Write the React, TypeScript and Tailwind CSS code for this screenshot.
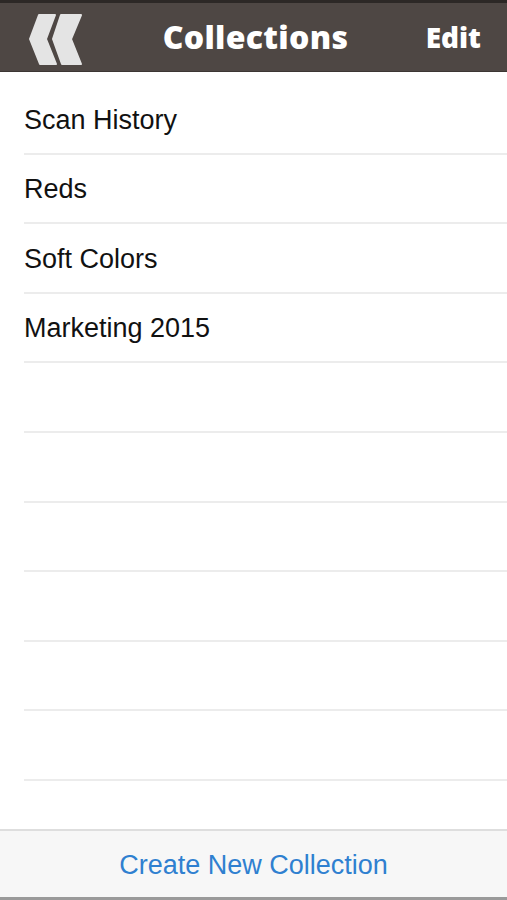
import React from "react";

const items = ["Scan History", "Reds", "Soft Colors", "Marketing 2015", "", "", "", "", "", ""];

export default function App() {
  return (
    <div className="w-[507px] h-[900px] flex flex-col bg-white overflow-hidden" style={{ fontFamily: '"Liberation Sans", Arial, sans-serif' }}>
      <header className="h-[72px] shrink-0 bg-[#4e4744] border-t-[3px] border-[#2c2826] border-b border-b-[#3c3633] flex items-center relative">
        <svg className="absolute left-[26px] top-[9px]" width="60" height="56" viewBox="0 0 60 56">
          <g fill="#e4e4e4" stroke="#e4e4e4" strokeWidth="2" strokeLinejoin="round">
            <polygon points="13,3 29,3 20,27 30,52 14,52 4,27" />
            <polygon points="35,3 55,3 45,27 55,52 36,52 27,27" />
          </g>
        </svg>
        <div className="flex-1 text-center text-white text-[32px] font-extrabold tracking-[0.3px] pl-[4px] leading-none" style={{ fontFamily: '"Open Sans", sans-serif' }}>
          Collections
        </div>
        <div className="absolute right-[26px] top-[17px] text-white text-[28px] font-extrabold leading-[34px]" style={{ fontFamily: '"Open Sans", sans-serif' }}>
          Edit
        </div>
      </header>
      <div className="flex-1 pt-[13px] flex flex-col">
        {items.map((t, i) => (
          <div key={i} className="h-[69.6px] shrink-0 pl-[24px]">
            <div className="h-full flex items-center border-b-2 border-[#ececec] text-[27px] text-[#111] pt-[2px]">{t}</div>
          </div>
        ))}
      </div>
      <div className="h-[71px] shrink-0 bg-[#f7f7f7] border-t-2 border-[#dedede] border-b-[3px] border-b-[#9a9a9a] flex items-center justify-center">
        <span className="text-[27px] text-[#2f80d0] pt-[2px]">Create New Collection</span>
      </div>
    </div>
  );
}
